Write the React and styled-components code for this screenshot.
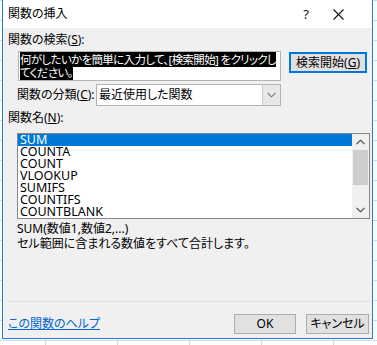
import React from "react";
import styled, { createGlobalStyle } from "styled-components";

const Global = createGlobalStyle`
  html, body { margin: 0; padding: 0; }
  body {
    width: 377px;
    height: 345px;
    overflow: hidden;
    background-color: #ffffff;
    background-image:
      linear-gradient(#d9d9d9 1px, transparent 1px),
      linear-gradient(90deg, #d9d9d9 1px, transparent 1px);
    background-size: 72px 20px;
    background-position: 45px 20px;
    font-family: "Noto Sans", "Noto Sans CJK JP", sans-serif;
    font-feature-settings: "palt";
  }
`;

const Dialog = styled.div`
  box-sizing: border-box;
  margin-left: 2px;
  width: 371px;
  height: 339px;
  border: 1px solid #1c7fd6;
  border-top: none;
  display: flex;
  flex-direction: column;
  background: #f0f0f0;
  color: #000;
  font-size: 12px;
`;

const TitleBar = styled.div`
  height: 28px;
  background: #fff;
  display: flex;
  align-items: center;
  padding-left: 5px;
  flex-shrink: 0;
`;

const Title = styled.div`
  flex: 1;
  font-size: 12px;
  line-height: 16px;
  margin-top: -1px;
`;

const TitleIcon = styled.div`
  display: flex;
  align-items: center;
  justify-content: center;
  width: ${(p) => p.$w}px;
  height: 20px;
  font-size: 13px;
  color: #111;
`;

const Body = styled.div`
  flex: 1;
  display: flex;
  flex-direction: column;
  padding: 4px 0 0 0;
`;

const Label = styled.div`
  line-height: 16px;
  height: 16px;
  margin-left: ${(p) => p.$indent || 5}px;
  margin-top: ${(p) => p.$top || 0}px;
  white-space: nowrap;
`;

const Key = styled.span`
  text-decoration: underline;
  text-underline-offset: 1px;
`;

const SearchRow = styled.div`
  display: flex;
  align-items: flex-start;
  margin-top: 3px;
  margin-left: 15px;
`;

const TextArea = styled.div`
  box-sizing: border-box;
  width: 263px;
  height: 30px;
  background: #fff;
  border: 1px solid #b4b4b4;
  padding: 1px 0 0 1px;
  line-height: 13px;
  font-size: 11.5px;
  letter-spacing: -0.65px;
  white-space: nowrap;
  overflow: hidden;
`;

const Selected = styled.span`
  background: #000;
  color: #fff;
`;

const Button = styled.button`
  box-sizing: border-box;
  width: ${(p) => p.$w}px;
  height: ${(p) => p.$h || 20}px;
  margin: ${(p) => p.$m || 0};
  padding: 0;
  background: #e1e1e1;
  border: 1px solid ${(p) => (p.$default ? "#0078d7" : "#adadad")};
  box-shadow: ${(p) => (p.$default ? "inset 0 0 0 1px #0078d7" : "none")};
  font-family: "Noto Sans", "Noto Sans CJK JP", sans-serif;
  font-feature-settings: "palt";
  font-size: 12px;
  line-height: 16px;
  color: #000;
  display: flex;
  align-items: center;
  justify-content: center;
`;

const CategoryRow = styled.div`
  display: flex;
  align-items: center;
  margin-top: 3px;
  margin-left: 14px;
  height: 22px;
`;

const CatLabel = styled.div`
  width: 79px;
  line-height: 16px;
  white-space: nowrap;
`;

const Select = styled.div`
  box-sizing: border-box;
  width: 185px;
  height: 22px;
  background: #fff;
  border: 1px solid #b4b4b4;
  display: flex;
  align-items: stretch;
`;

const SelectText = styled.div`
  flex: 1;
  padding-left: 2px;
  line-height: 19px;
`;

const DropBtn = styled.div`
  width: 17px;
  border-left: 1px solid #c9c9c9;
  background: #e8e8e8;
  display: flex;
  align-items: center;
  justify-content: center;
`;

const ListBox = styled.div`
  box-sizing: border-box;
  margin: 7px 0 0 14px;
  width: 353px;
  height: 86px;
  background: #fff;
  border: 1px solid #828790;
  display: flex;
`;

const Items = styled.div`
  flex: 1;
  display: flex;
  flex-direction: column;
`;

const Item = styled.div`
  height: 12px;
  line-height: 12px;
  padding-left: 2px;
  font-size: 12.5px;
  background: ${(p) => (p.$sel ? "#0078d7" : "transparent")};
  color: ${(p) => (p.$sel ? "#fff" : "#000")};
  white-space: nowrap;
`;

const ScrollBar = styled.div`
  width: 17px;
  background: #f0f0f0;
  display: flex;
  flex-direction: column;
`;

const ScrollArrow = styled.div`
  height: 16px;
  display: flex;
  align-items: center;
  justify-content: center;
`;

const Thumb = styled.div`
  margin: 0 1px;
  height: 35px;
  background: #cdcdcd;
`;

const ScrollFill = styled.div`
  flex: 1;
`;

const Desc = styled.div`
  margin: 2px 0 0 14px;
  line-height: 15px;
  font-size: 12px;
`;

const Spacer = styled.div`
  flex: 1;
`;

const Separator = styled.div`
  height: 1px;
  margin: 0 3px 0 5px;
  background: #dfdfdf;
`;

const Footer = styled.div`
  display: flex;
  align-items: center;
  margin: 12px 3px 4px 5px;
  height: 20px;
`;

const HelpLink = styled.a`
  flex: 1;
  color: #0066cc;
  text-decoration: underline;
  text-underline-offset: 1px;
  font-size: 12px;
  line-height: 16px;
  cursor: pointer;
`;

const Chevron = ({ dir = "down", color = "#606060" }) => (
  <svg width="9" height="6" viewBox="0 0 9 6">
    <polyline
      points={dir === "down" ? "0.5,0.8 4.5,4.8 8.5,0.8" : "0.5,5.2 4.5,1.2 8.5,5.2"}
      fill="none"
      stroke={color}
      strokeWidth="1.1"
    />
  </svg>
);

const items = ["SUM", "COUNTA", "COUNT", "VLOOKUP", "SUMIFS", "COUNTIFS", "COUNTBLANK"];

export default function App() {
  return (
    <>
      <Global />
      <Dialog>
        <TitleBar>
          <Title>関数の挿入</Title>
          <TitleIcon $w={20}>?</TitleIcon>
          <TitleIcon $w={45}>
            <svg width="11" height="11" viewBox="0 0 11 11">
              <path d="M0.5 0.5 L10.5 10.5 M10.5 0.5 L0.5 10.5" stroke="#111" strokeWidth="1.1" />
            </svg>
          </TitleIcon>
          <div style={{ width: 11 }} />
        </TitleBar>
        <Body>
          <Label>
            関数の検索(<Key>S</Key>):
          </Label>
          <SearchRow>
            <TextArea>
              <Selected>何がしたいかを簡単に入力して、[検索開始] をクリックし</Selected>
              <br />
              <Selected>てください。</Selected>
            </TextArea>
            <Button $w={78} $h={21} $m="1px 0 0 8px" $default>
              検索開始(<Key>G</Key>)
            </Button>
          </SearchRow>
          <CategoryRow>
            <CatLabel>
              関数の分類(<Key>C</Key>):
            </CatLabel>
            <Select>
              <SelectText>最近使用した関数</SelectText>
              <DropBtn>
                <Chevron dir="down" color="#707070" />
              </DropBtn>
            </Select>
          </CategoryRow>
          <Label $top={4}>
            関数名(<Key>N</Key>):
          </Label>
          <ListBox>
            <Items>
              {items.map((it, i) => (
                <Item key={it} $sel={i === 0}>
                  {it}
                </Item>
              ))}
            </Items>
            <ScrollBar>
              <ScrollArrow>
                <Chevron dir="up" color="#404040" />
              </ScrollArrow>
              <Thumb />
              <ScrollFill />
              <ScrollArrow>
                <Chevron dir="down" color="#404040" />
              </ScrollArrow>
            </ScrollBar>
          </ListBox>
          <Desc>
            SUM(数値1,数値2,...)
            <br />
            セル範囲に含まれる数値をすべて合計します。
          </Desc>
          <Spacer />
          <Separator />
          <Footer>
            <HelpLink>この関数のヘルプ</HelpLink>
            <Button $w={62}>OK</Button>
            <Button $w={63} $m="0 0 0 10px">
              キャンセル
            </Button>
          </Footer>
        </Body>
      </Dialog>
    </>
  );
}
